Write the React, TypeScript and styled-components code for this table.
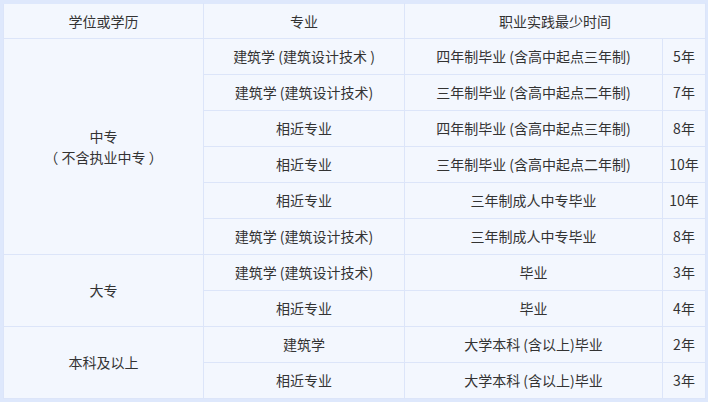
import React from "react";
import styled, { createGlobalStyle } from "styled-components";

const Global = createGlobalStyle`
  html, body { margin: 0; padding: 0; background: #dee8fc; }
  body { font-family: "Noto Sans CJK SC", "Noto Sans", sans-serif; }
`;

const Wrap = styled.div`
  padding: 3px 3px 4px 3px;
  width: 702px;
`;

const Table = styled.table`
  width: 702px;
  border-collapse: collapse;
  table-layout: fixed;
  background: #f3f7fe;
  font-size: 14px;
  color: #333;
`;

const Cell = styled.td<{ $h?: number }>`
  border: 1px solid #dce5f9;
  text-align: center;
  vertical-align: middle;
  padding: 0;
  height: ${(p) => p.$h ?? 35}px;
  line-height: 21px;
  white-space: nowrap;
`;

const HeadCell = styled(Cell).attrs({ as: "th" })`
  font-weight: normal;
  border-top-color: #dee8fc;
`;

type Row = { major: string; cond: string; years: string };

const zhongzhuan: Row[] = [
  { major: "建筑学 (建筑设计技术 )", cond: "四年制毕业 (含高中起点三年制)", years: "5年" },
  { major: "建筑学 (建筑设计技术)", cond: "三年制毕业 (含高中起点二年制)", years: "7年" },
  { major: "相近专业", cond: "四年制毕业 (含高中起点三年制)", years: "8年" },
  { major: "相近专业", cond: "三年制毕业 (含高中起点二年制)", years: "10年" },
  { major: "相近专业", cond: "三年制成人中专毕业", years: "10年" },
  { major: "建筑学 (建筑设计技术)", cond: "三年制成人中专毕业", years: "8年" },
];

const dazhuan: Row[] = [
  { major: "建筑学 (建筑设计技术)", cond: "毕业", years: "3年" },
  { major: "相近专业", cond: "毕业", years: "4年" },
];

const benke: Row[] = [
  { major: "建筑学", cond: "大学本科 (含以上)毕业", years: "2年" },
  { major: "相近专业", cond: "大学本科 (含以上)毕业", years: "3年" },
];

const groups: { label: React.ReactNode; rows: Row[] }[] = [
  {
    label: (
      <>
        中专
        <br />（ 不含执业中专 ）
      </>
    ),
    rows: zhongzhuan,
  },
  { label: "大专", rows: dazhuan },
  { label: "本科及以上", rows: benke },
];

export default function App() {
  return (
    <>
      <Global />
      <Wrap>
        <Table>
          <colgroup>
            <col style={{ width: 200 }} />
            <col style={{ width: 201 }} />
            <col style={{ width: 258 }} />
            <col style={{ width: 43 }} />
          </colgroup>
          <thead>
            <tr>
              <HeadCell $h={34}>学位或学历</HeadCell>
              <HeadCell $h={34}>专业</HeadCell>
              <HeadCell $h={34} colSpan={2}>
                职业实践最少时间
              </HeadCell>
            </tr>
          </thead>
          <tbody>
            {groups.map((g, gi) =>
              g.rows.map((r, ri) => (
                <tr key={`${gi}-${ri}`}>
                  {ri === 0 && <Cell rowSpan={g.rows.length}>{g.label}</Cell>}
                  <Cell>{r.major}</Cell>
                  <Cell>{r.cond}</Cell>
                  <Cell>{r.years}</Cell>
                </tr>
              ))
            )}
          </tbody>
        </Table>
      </Wrap>
    </>
  );
}
